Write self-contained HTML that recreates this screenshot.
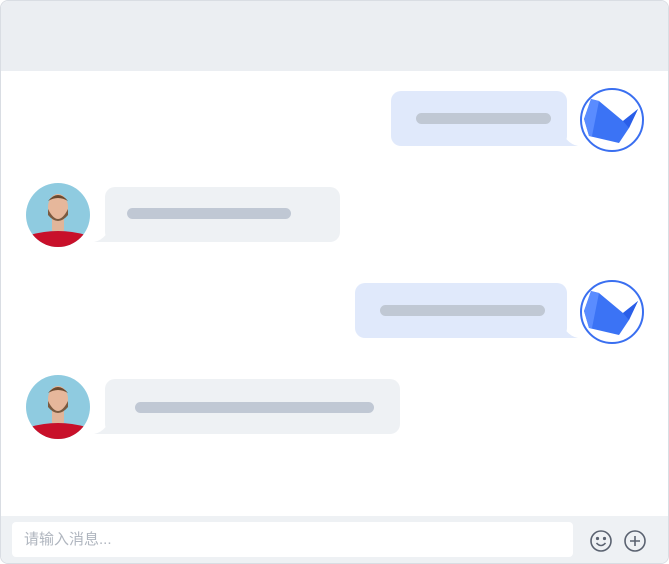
<!DOCTYPE html><html><head><style>
body{margin:0;width:669px;height:564px;background:#fff;font-family:"Liberation Sans","Noto Sans CJK SC",sans-serif;overflow:hidden}
.box{position:absolute;left:0;top:0;width:667px;height:562px;border:1px solid #d9dde3;border-radius:8px;overflow:hidden;background:#fff}
.hd{position:absolute;left:0;top:0;right:0;height:70px;background:#ebeef2}
.b{position:absolute;border-radius:10px}
.r{background:#e0e9fb}.l{background:#eef1f4}
.bar{position:absolute;height:11px;border-radius:6px;background:#c0c8d4}
.ft{position:absolute;left:0;right:0;top:515px;bottom:0;background:#eef1f4}
.in{position:absolute;left:11px;top:6px;width:561px;height:35px;background:#fff;border-radius:4px;color:#b0b6bf;font-size:15px;line-height:35px;padding-left:12px;box-sizing:border-box}
.av{position:absolute;width:64px;height:64px}
</style></head><body><div class="box">
<div class="hd"></div>
<svg width="669" height="564" style="position:absolute;left:0;top:0">
<path d="M558 120 Q562 142 577 145 L550 145Z" fill="#e0e9fb"/>
<path d="M558 312 Q562 334 577 337 L550 337Z" fill="#e0e9fb"/>
<path d="M112 216 Q108 238 93 241 L120 241Z" fill="#eef1f4"/>
<path d="M112 408 Q108 430 93 433 L120 433Z" fill="#eef1f4"/>
</svg>
<div class="b r" style="left:390px;top:90px;width:176px;height:55px"></div><div class="bar" style="left:415px;top:112px;width:135px"></div>
<div class="b l" style="left:104px;top:186px;width:235px;height:55px"></div><div class="bar" style="left:126px;top:207px;width:164px"></div>
<div class="b r" style="left:354px;top:282px;width:212px;height:55px"></div><div class="bar" style="left:379px;top:304px;width:165px"></div>
<div class="b l" style="left:104px;top:378px;width:295px;height:55px"></div><div class="bar" style="left:134px;top:401px;width:239px"></div>
<svg class="av" style="left:579px;top:87px" viewBox="0 0 64 64"><circle cx="32" cy="32" r="31" fill="#fff" stroke="#3a6ff0" stroke-width="2"/><path d="M11 11 L19 13 L43 33 L58 21 L49 40 L39 55 L9 48 L4 31Z" fill="#3b73f5"/><path d="M11 11 L19 13 L12 48 L9 48 L4 31Z" fill="#5a8cff"/><path d="M43 33 L58 21 L49 40Z" fill="#2a5ee8"/></svg>
<svg class="av" style="left:579px;top:279px" viewBox="0 0 64 64"><circle cx="32" cy="32" r="31" fill="#fff" stroke="#3a6ff0" stroke-width="2"/><path d="M11 11 L19 13 L43 33 L58 21 L49 40 L39 55 L9 48 L4 31Z" fill="#3b73f5"/><path d="M11 11 L19 13 L12 48 L9 48 L4 31Z" fill="#5a8cff"/><path d="M43 33 L58 21 L49 40Z" fill="#2a5ee8"/></svg>
<svg class="av" style="left:25px;top:182px" viewBox="0 0 64 64"><defs><clipPath id="c1"><circle cx="32" cy="32" r="32"/></clipPath></defs><g clip-path="url(#c1)"><rect width="64" height="64" fill="#8fcbe0"/><path d="M0 64 L4 52 Q32 44 60 52 L64 64Z" fill="#c8102a"/><rect x="26" y="36" width="12" height="12" fill="#e0b59a"/><ellipse cx="32" cy="24" rx="10" ry="13" fill="#e6b79b"/><path d="M22 26 Q32 46 42 26 L42 32 Q32 44 22 32Z" fill="#7a5a40"/><path d="M22 18 Q32 6 42 18 Q32 12 22 18Z" fill="#6b4a30"/></g></svg>
<svg class="av" style="left:25px;top:374px" viewBox="0 0 64 64"><g clip-path="url(#c1)"><rect width="64" height="64" fill="#8fcbe0"/><path d="M0 64 L4 52 Q32 44 60 52 L64 64Z" fill="#c8102a"/><rect x="26" y="36" width="12" height="12" fill="#e0b59a"/><ellipse cx="32" cy="24" rx="10" ry="13" fill="#e6b79b"/><path d="M22 26 Q32 46 42 26 L42 32 Q32 44 22 32Z" fill="#7a5a40"/><path d="M22 18 Q32 6 42 18 Q32 12 22 18Z" fill="#6b4a30"/></g></svg>
<div class="ft"><div class="in">请输入消息...</div>
<svg style="position:absolute;left:588px;top:13px" width="24" height="24" viewBox="0 0 24 24" fill="none" stroke="#5a6270" stroke-width="1.6"><circle cx="12" cy="12" r="10"/><circle cx="8.5" cy="9.5" r=".8" fill="#5a6270"/><circle cx="15.5" cy="9.5" r=".8" fill="#5a6270"/><path d="M7.5 14 Q12 19 16.5 14"/></svg>
<svg style="position:absolute;left:622px;top:13px" width="24" height="24" viewBox="0 0 24 24" fill="none" stroke="#5a6270" stroke-width="1.6"><circle cx="12" cy="12" r="10"/><path d="M12 7v10M7 12h10"/></svg>
</div></div></body></html>
